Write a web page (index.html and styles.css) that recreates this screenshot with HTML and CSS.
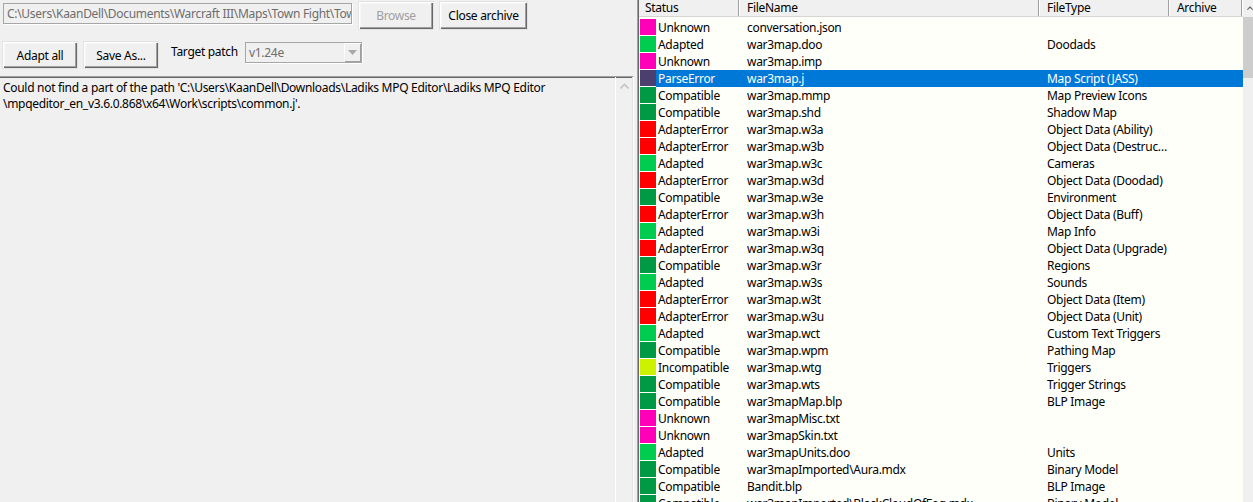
FILE: index.html
```html
<!DOCTYPE html>
<html>
<head>
<meta charset="utf-8">
<link rel="stylesheet" href="styles.css">
</head>
<body>
<div class="window">
  <div class="left">
    <div class="row1">
      <div class="pathbox">C:\Users\KaanDell\Documents\Warcraft III\Maps\Town Fight\Town Fight.w3x</div>
      <button class="btn btn-browse" disabled>Browse</button>
      <button class="btn btn-close">Close archive</button>
    </div>
    <div class="row2">
      <button class="btn btn-adapt">Adapt all</button>
      <button class="btn btn-save">Save As...</button>
      <span class="label">Target patch</span>
      <div class="combo">
        <span class="combo-text">v1.24e</span>
        <span class="combo-btn"><svg width="9" height="5" viewBox="0 0 9 5"><path d="M0 0h9L4.5 5z" fill="#a8a8a8"/></svg></span>
      </div>
    </div>
    <div class="log">
      <div class="log-text">Could not find a part of the path 'C:\Users\KaanDell\Downloads\Ladiks MPQ Editor\Ladiks MPQ Editor<br>\mpqeditor_en_v3.6.0.868\x64\Work\scripts\common.j'.</div>
      <div class="log-scroll"><svg width="9" height="6" viewBox="0 0 9 6"><path d="M0.5 5.5L4.5 1.5L8.5 5.5" fill="none" stroke="#c4c4c4" stroke-width="1.6"/></svg></div>
    </div>
  </div>
  <div class="splitter"></div>
  <div class="list">
    <div class="list-main">
      <div class="header">
        <div class="hcell c-status">Status</div>
        <div class="hcell c-name">FileName</div>
        <div class="hcell c-type">FileType</div>
        <div class="hcell c-arch">Archive</div>
      </div>
      <div class="rows">
        <div class="row"><div class="cell c-status"><span class="sw unknown"></span><span class="st">Unknown</span></div><div class="cell c-name">conversation.json</div><div class="cell c-type"></div><div class="cell c-arch"></div></div>
        <div class="row"><div class="cell c-status"><span class="sw adapted"></span><span class="st">Adapted</span></div><div class="cell c-name">war3map.doo</div><div class="cell c-type">Doodads</div><div class="cell c-arch"></div></div>
        <div class="row"><div class="cell c-status"><span class="sw unknown"></span><span class="st">Unknown</span></div><div class="cell c-name">war3map.imp</div><div class="cell c-type"></div><div class="cell c-arch"></div></div>
        <div class="row selected"><div class="cell c-status"><span class="sw parse"></span><span class="st">ParseError</span></div><div class="cell c-name">war3map.j</div><div class="cell c-type">Map Script (JASS)</div><div class="cell c-arch"></div></div>
        <div class="row"><div class="cell c-status"><span class="sw compat"></span><span class="st">Compatible</span></div><div class="cell c-name">war3map.mmp</div><div class="cell c-type">Map Preview Icons</div><div class="cell c-arch"></div></div>
        <div class="row"><div class="cell c-status"><span class="sw compat"></span><span class="st">Compatible</span></div><div class="cell c-name">war3map.shd</div><div class="cell c-type">Shadow Map</div><div class="cell c-arch"></div></div>
        <div class="row"><div class="cell c-status"><span class="sw error"></span><span class="st">AdapterError</span></div><div class="cell c-name">war3map.w3a</div><div class="cell c-type">Object Data (Ability)</div><div class="cell c-arch"></div></div>
        <div class="row"><div class="cell c-status"><span class="sw error"></span><span class="st">AdapterError</span></div><div class="cell c-name">war3map.w3b</div><div class="cell c-type">Object Data (Destruc…</div><div class="cell c-arch"></div></div>
        <div class="row"><div class="cell c-status"><span class="sw adapted"></span><span class="st">Adapted</span></div><div class="cell c-name">war3map.w3c</div><div class="cell c-type">Cameras</div><div class="cell c-arch"></div></div>
        <div class="row"><div class="cell c-status"><span class="sw error"></span><span class="st">AdapterError</span></div><div class="cell c-name">war3map.w3d</div><div class="cell c-type">Object Data (Doodad)</div><div class="cell c-arch"></div></div>
        <div class="row"><div class="cell c-status"><span class="sw compat"></span><span class="st">Compatible</span></div><div class="cell c-name">war3map.w3e</div><div class="cell c-type">Environment</div><div class="cell c-arch"></div></div>
        <div class="row"><div class="cell c-status"><span class="sw error"></span><span class="st">AdapterError</span></div><div class="cell c-name">war3map.w3h</div><div class="cell c-type">Object Data (Buff)</div><div class="cell c-arch"></div></div>
        <div class="row"><div class="cell c-status"><span class="sw adapted"></span><span class="st">Adapted</span></div><div class="cell c-name">war3map.w3i</div><div class="cell c-type">Map Info</div><div class="cell c-arch"></div></div>
        <div class="row"><div class="cell c-status"><span class="sw error"></span><span class="st">AdapterError</span></div><div class="cell c-name">war3map.w3q</div><div class="cell c-type">Object Data (Upgrade)</div><div class="cell c-arch"></div></div>
        <div class="row"><div class="cell c-status"><span class="sw compat"></span><span class="st">Compatible</span></div><div class="cell c-name">war3map.w3r</div><div class="cell c-type">Regions</div><div class="cell c-arch"></div></div>
        <div class="row"><div class="cell c-status"><span class="sw adapted"></span><span class="st">Adapted</span></div><div class="cell c-name">war3map.w3s</div><div class="cell c-type">Sounds</div><div class="cell c-arch"></div></div>
        <div class="row"><div class="cell c-status"><span class="sw error"></span><span class="st">AdapterError</span></div><div class="cell c-name">war3map.w3t</div><div class="cell c-type">Object Data (Item)</div><div class="cell c-arch"></div></div>
        <div class="row"><div class="cell c-status"><span class="sw error"></span><span class="st">AdapterError</span></div><div class="cell c-name">war3map.w3u</div><div class="cell c-type">Object Data (Unit)</div><div class="cell c-arch"></div></div>
        <div class="row"><div class="cell c-status"><span class="sw adapted"></span><span class="st">Adapted</span></div><div class="cell c-name">war3map.wct</div><div class="cell c-type">Custom Text Triggers</div><div class="cell c-arch"></div></div>
        <div class="row"><div class="cell c-status"><span class="sw compat"></span><span class="st">Compatible</span></div><div class="cell c-name">war3map.wpm</div><div class="cell c-type">Pathing Map</div><div class="cell c-arch"></div></div>
        <div class="row"><div class="cell c-status"><span class="sw incompat"></span><span class="st">Incompatible</span></div><div class="cell c-name">war3map.wtg</div><div class="cell c-type">Triggers</div><div class="cell c-arch"></div></div>
        <div class="row"><div class="cell c-status"><span class="sw compat"></span><span class="st">Compatible</span></div><div class="cell c-name">war3map.wts</div><div class="cell c-type">Trigger Strings</div><div class="cell c-arch"></div></div>
        <div class="row"><div class="cell c-status"><span class="sw compat"></span><span class="st">Compatible</span></div><div class="cell c-name">war3mapMap.blp</div><div class="cell c-type">BLP Image</div><div class="cell c-arch"></div></div>
        <div class="row"><div class="cell c-status"><span class="sw unknown"></span><span class="st">Unknown</span></div><div class="cell c-name">war3mapMisc.txt</div><div class="cell c-type"></div><div class="cell c-arch"></div></div>
        <div class="row"><div class="cell c-status"><span class="sw unknown"></span><span class="st">Unknown</span></div><div class="cell c-name">war3mapSkin.txt</div><div class="cell c-type"></div><div class="cell c-arch"></div></div>
        <div class="row"><div class="cell c-status"><span class="sw adapted"></span><span class="st">Adapted</span></div><div class="cell c-name">war3mapUnits.doo</div><div class="cell c-type">Units</div><div class="cell c-arch"></div></div>
        <div class="row"><div class="cell c-status"><span class="sw compat"></span><span class="st">Compatible</span></div><div class="cell c-name">war3mapImported\Aura.mdx</div><div class="cell c-type">Binary Model</div><div class="cell c-arch"></div></div>
        <div class="row"><div class="cell c-status"><span class="sw compat"></span><span class="st">Compatible</span></div><div class="cell c-name">Bandit.blp</div><div class="cell c-type">BLP Image</div><div class="cell c-arch"></div></div>
        <div class="row"><div class="cell c-status"><span class="sw compat"></span><span class="st">Compatible</span></div><div class="cell c-name">war3mapImported\BlackCloudOfFog.mdx</div><div class="cell c-type">Binary Model</div><div class="cell c-arch"></div></div>
      </div>
    </div>
    <div class="vscroll">
      <div class="vscroll-up"><svg width="9" height="6" viewBox="0 0 9 6"><path d="M0.5 5.5L4.5 1.5L8.5 5.5" fill="none" stroke="#606060" stroke-width="1.6"/></svg></div>
      <div class="vscroll-thumb"></div>
    </div>
  </div>
</div>
</body>
</html>
```

FILE: styles.css
```css
html, body {
  margin: 0;
  padding: 0;
  overflow: hidden;
}
body {
  background: #f0f0f0;
  font-family: "Noto Sans", "Open Sans", sans-serif;
  font-size: 12px;
  letter-spacing: -0.3px;
  color: #000;
}
.window {
  display: flex;
  width: 1253px;
  height: 502px;
  overflow: hidden;
}
.left {
  width: 634px;
  flex: none;
  display: flex;
  flex-direction: column;
}
.row1 {
  height: 42px;
  box-sizing: border-box;
  padding: 2px 0 0 3px;
  display: flex;
  align-items: flex-start;
}
.pathbox {
  margin-top: 1px;
  width: 349px;
  height: 21px;
  box-sizing: border-box;
  border: 1px solid #a6a6a6;
  box-shadow: 1px 1px 0 #fff;
  padding: 0 3px;
  line-height: 19px;
  color: #6d6d6d;
  white-space: nowrap;
  overflow: hidden;
}
.btn {
  font-family: inherit;
  font-size: 12px;
  letter-spacing: -0.3px;
  background: #f0f0f0;
  border: none;
  padding: 0;
  color: #000;
  box-shadow: inset 1px 1px 0 #fff, inset -1px -1px 0 #696969, inset -2px -2px 0 #a0a0a0, inset 2px 2px 0 #f6f6f6;
  outline: 1px solid #e3e3e3;
}
.btn-browse {
  margin-left: 7px;
  width: 74px;
  height: 27px;
  color: #a0a0a0;
}
.btn-close {
  margin-left: 7px;
  width: 87px;
  height: 27px;
}
.row2 {
  height: 34px;
  box-sizing: border-box;
  padding: 0 0 0 3px;
  display: flex;
  align-items: flex-start;
}
.btn-adapt {
  width: 74px;
  height: 26px;
}
.btn-save {
  margin-left: 7px;
  width: 74px;
  height: 26px;
}
.label {
  margin-left: 13px;
  width: 74px;
  flex: none;
  line-height: 20px;
}
.combo {
  width: 117px;
  height: 21px;
  box-sizing: border-box;
  border: 1px solid #a6a6a6;
  box-shadow: 1px 1px 0 #fff;
  display: flex;
  align-items: stretch;
}
.combo-text {
  flex: 1;
  padding-left: 3px;
  line-height: 19px;
  color: #6d6d6d;
}
.combo-btn {
  width: 17px;
  display: flex;
  align-items: center;
  justify-content: center;
  box-shadow: inset 1px 1px 0 #fff, inset -1px -1px 0 #a0a0a0;
}
.log {
  flex: 1;
  display: flex;
  border-top: 1px solid #a0a0a0;
  box-shadow: inset 0 1px 0 #696969;
  border-right: 1px solid #fff;
}
.log-text {
  flex: 1;
  padding: 3px 3px 0;
  line-height: 16px;
  white-space: nowrap;
}
.log-scroll {
  width: 17px;
  border-left: 1px solid #fff;
  box-shadow: inset -1px 0 0 #e3e3e3;
  display: flex;
  justify-content: center;
  padding-top: 6px;
  align-items: flex-start;
}
.splitter {
  width: 3px;
  flex: none;
}
.list {
  flex: 1;
  display: flex;
  border-left: 1px solid #a0a0a0;
  box-shadow: inset 1px 0 0 #696969;
  background: #fffffa;
  padding-left: 1px;
  overflow: hidden;
}
.list-main {
  width: 603px;
  flex: none;
  padding-left: 1px;
  overflow: hidden;
}
.header {
  display: flex;
  height: 16px;
  background: #f0f0f0;
  border-bottom: 1px solid #d5d5d5;
  margin-left: -1px;
  padding-left: 1px;
}
.hcell {
  line-height: 16px;
  box-sizing: border-box;
  box-shadow: inset -1px 0 0 #fff, inset -2px 0 0 #a0a0a0;
  white-space: nowrap;
}
.hcell.c-status { padding-left: 5px; }
.hcell.c-name { padding-left: 7px; }
.hcell.c-type { padding-left: 7px; }
.hcell.c-arch { padding-left: 7px; }
.c-status { width: 100px; flex: none; }
.c-name { width: 300px; flex: none; }
.c-type { width: 130px; flex: none; }
.c-arch { width: 73px; flex: none; }
.rows {
  padding-top: 2px;
}
.row {
  display: flex;
  height: 17px;
  line-height: 18px;
}
.cell {
  box-sizing: border-box;
  white-space: nowrap;
  overflow: hidden;
}
.cell.c-status {
  display: flex;
  align-items: flex-start;
}
.cell.c-name, .cell.c-type, .cell.c-arch {
  padding-left: 7px;
}
.sw {
  width: 16px;
  height: 16px;
  flex: none;
}
.st {
  padding-left: 2px;
  height: 17px;
  flex: 1;
}
.sw.unknown { background: #ff00b8; }
.sw.adapted { background: #00cc50; }
.sw.compat { background: #009944; }
.sw.error { background: #ff0000; }
.sw.incompat { background: #ccf200; }
.sw.parse { background: #4a3f6e; }
.row.selected .st,
.row.selected .c-name,
.row.selected .c-type,
.row.selected .c-arch {
  background: #0078d7;
  color: #fff;
}
.vscroll {
  width: 10px;
  flex: none;
  background: #f0f0f0;
  display: flex;
  flex-direction: column;
}
.vscroll-up {
  height: 16px;
  display: flex;
  justify-content: center;
  align-items: center;
  padding-left: 4px;
}
.vscroll-thumb {
  margin-top: 1px;
  height: 61px;
  background: #cdcdcd;
}
```
